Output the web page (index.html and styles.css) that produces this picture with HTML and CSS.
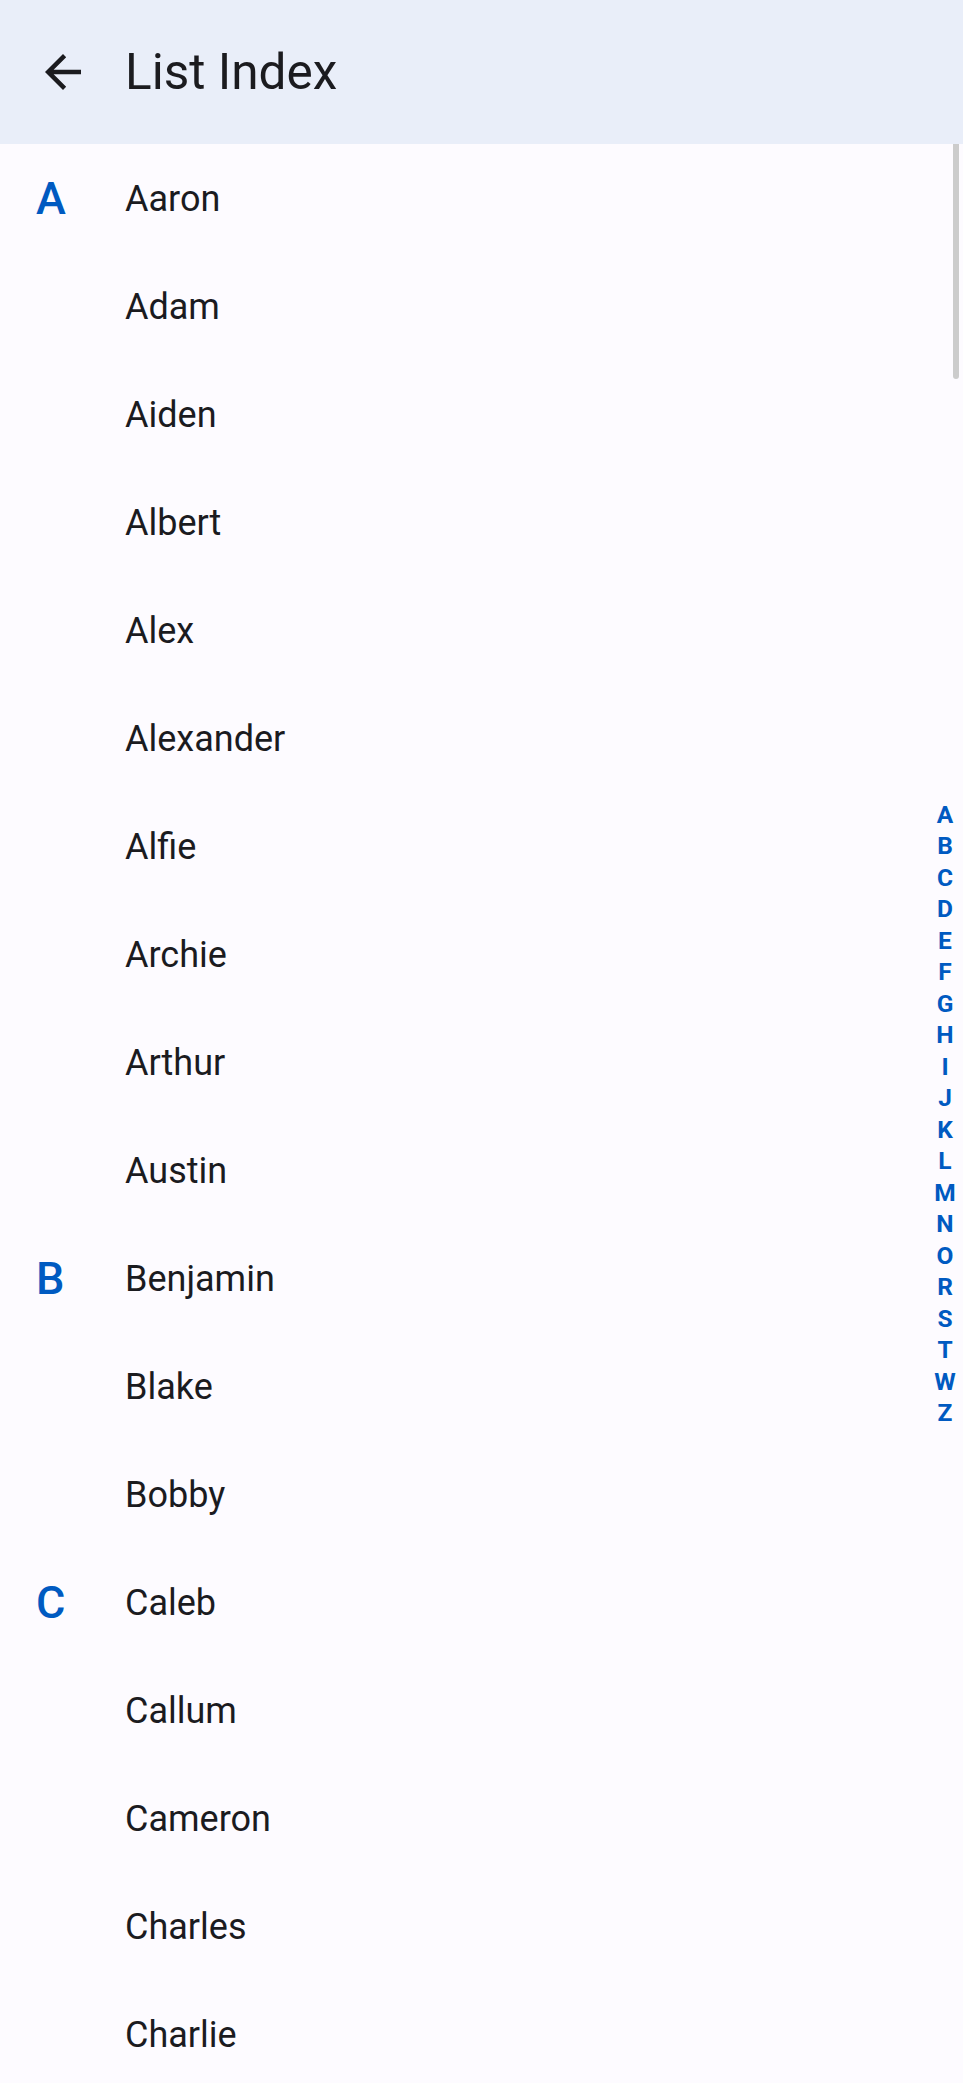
FILE: index.html
```html
<!DOCTYPE html>
<html>
<head>
<meta charset="utf-8">
<link rel="stylesheet" href="styles.css">
</head>
<body>
<div class="screen">
  <header class="appbar">
    <svg class="back" viewBox="0 0 24 24" width="54" height="54"><path d="M20 11H7.83l5.59-5.59L12 4l-8 8 8 8 1.41-1.41L7.83 13H20v-2z" fill="#1b1b1f"/></svg>
    <h1 class="title">List Index</h1>
  </header>
  <main class="list">
    <div class="row"><span class="sec">A</span><span class="name">Aaron</span></div>
    <div class="row"><span class="sec"></span><span class="name">Adam</span></div>
    <div class="row"><span class="sec"></span><span class="name">Aiden</span></div>
    <div class="row"><span class="sec"></span><span class="name">Albert</span></div>
    <div class="row"><span class="sec"></span><span class="name">Alex</span></div>
    <div class="row"><span class="sec"></span><span class="name">Alexander</span></div>
    <div class="row"><span class="sec"></span><span class="name">Alfie</span></div>
    <div class="row"><span class="sec"></span><span class="name">Archie</span></div>
    <div class="row"><span class="sec"></span><span class="name">Arthur</span></div>
    <div class="row"><span class="sec"></span><span class="name">Austin</span></div>
    <div class="row"><span class="sec">B</span><span class="name">Benjamin</span></div>
    <div class="row"><span class="sec"></span><span class="name">Blake</span></div>
    <div class="row"><span class="sec"></span><span class="name">Bobby</span></div>
    <div class="row"><span class="sec">C</span><span class="name">Caleb</span></div>
    <div class="row"><span class="sec"></span><span class="name">Callum</span></div>
    <div class="row"><span class="sec"></span><span class="name">Cameron</span></div>
    <div class="row"><span class="sec"></span><span class="name">Charles</span></div>
    <div class="row"><span class="sec"></span><span class="name">Charlie</span></div>
    <div class="scrollbar"></div>
    <nav class="index">
      <span>A</span><span>B</span><span>C</span><span>D</span><span>E</span><span>F</span><span>G</span><span>H</span><span>I</span><span>J</span><span>K</span><span>L</span><span>M</span><span>N</span><span>O</span><span>R</span><span>S</span><span>T</span><span>W</span><span>Z</span>
    </nav>
  </main>
</div>
</body>
</html>
```

FILE: styles.css
```css
html, body {
  margin: 0;
  padding: 0;
  background: #fdfbff;
}
.screen {
  width: 963px;
  height: 2083px;
  overflow: hidden;
  display: flex;
  flex-direction: column;
  font-family: Roboto, "Noto Sans", sans-serif;
  color: #1b1b1f;
}
.appbar {
  height: 144px;
  flex: none;
  background: #e9eef9;
  display: flex;
  align-items: center;
  padding-left: 36px;
}
.back {
  display: block;
  flex: none;
}
.title {
  margin: 0 0 0 35px;
  font-size: 49.5px;
  font-weight: 400;
  line-height: 58px;
  color: #1b1b1f;
}
.list {
  position: relative;
  flex: 1;
  overflow: hidden;
}
.row {
  box-sizing: border-box;
  height: 108px;
  display: flex;
  align-items: center;
  padding-left: 36px;
  padding-top: 1px;
}
.sec {
  width: 89px;
  flex: none;
  font-size: 45px;
  font-weight: 500;
  color: #005ac1;
  line-height: 50px;
}
.name {
  font-size: 36px;
  line-height: 44px;
  color: #1b1b1f;
}
.scrollbar {
  position: absolute;
  top: 0;
  right: 4px;
  width: 6px;
  height: 235px;
  background: #cccccc;
  border-radius: 0 0 3px 3px;
}
.index {
  position: absolute;
  right: 0;
  top: 0;
  bottom: 0;
  width: 36px;
  display: flex;
  flex-direction: column;
  justify-content: center;
  align-items: center;
}
.index span {
  font-size: 24.5px;
  font-weight: 700;
  line-height: 31.5px;
  color: #005ac1;
}
```
